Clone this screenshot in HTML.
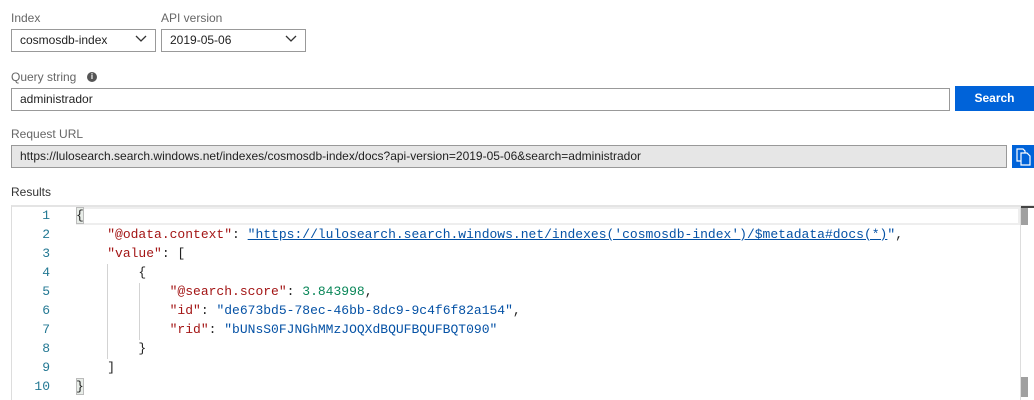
<!DOCTYPE html>
<html><head><meta charset="utf-8"><style>
*{box-sizing:border-box;margin:0;padding:0}
body{width:1034px;height:400px;overflow:hidden;background:#fff;font-family:"Liberation Sans",sans-serif;font-size:12px;color:#222;position:relative}
.a{position:absolute}
.lbl{color:#666;font-size:12px}
.box{border:1px solid #999;background:#fff;padding-left:8px;line-height:20px;font-size:12px;color:#222}
.chev{position:absolute;right:8px;top:5px}
.code{font-family:"Liberation Mono",monospace;font-size:13px;line-height:19px;white-space:pre}
.ln{position:absolute;left:11px;width:39px;text-align:right;color:#237893}
.k{color:#a31515}.s{color:#0451a5}.n{color:#098658}.p{color:#222}
.u{text-decoration:underline}
</style></head><body>
<div class="a lbl" style="left:11px;top:11px">Index</div>
<div class="a lbl" style="left:161px;top:11px">API version</div>
<div class="a box" style="left:11px;top:29px;width:145px;height:23px">cosmosdb-index<svg class="chev" width="12" height="8" viewBox="0 0 12 8"><path d="M1 1l5 5 5-5" fill="none" stroke="#333" stroke-width="1.3"/></svg></div>
<div class="a box" style="left:161px;top:29px;width:145px;height:23px">2019-05-06<svg class="chev" width="12" height="8" viewBox="0 0 12 8"><path d="M1 1l5 5 5-5" fill="none" stroke="#333" stroke-width="1.3"/></svg></div>
<div class="a lbl" style="left:11px;top:70px">Query string</div>
<div class="a" style="left:87px;top:72px;width:10px;height:10px;border-radius:50%;background:#555;color:#fff;font-size:8px;line-height:10px;text-align:center;font-weight:bold">i</div>
<div class="a box" style="left:11px;top:88px;width:939px;height:23px">administrador</div>
<div class="a" style="left:955px;top:86px;width:79px;height:25px;background:#0063d9;color:#fff;font-weight:bold;text-align:center;line-height:25px;font-size:12px">Search</div>
<div class="a lbl" style="left:11px;top:127px">Request URL</div>
<div class="a box" style="left:11px;top:145px;width:996px;height:23px;background:#e6e6e6">https://lulosearch.search.windows.net/indexes/cosmosdb-index/docs?api-version=2019-05-06&amp;search=administrador</div>
<div class="a" style="left:1012px;top:145px;width:22px;height:23px;background:#0063d9"><svg width="22" height="23" viewBox="0 0 22 23"><path d="M5 4h6l2 2v10H5z" fill="#0063d9" stroke="#fff" stroke-width="1.2"/><path d="M9 8h6l3 3v9H9z" fill="#0063d9" stroke="#fff" stroke-width="1.2"/></svg></div>
<div class="a" style="left:11px;top:185px;color:#333">Results</div>
<div class="a" style="left:11px;top:205px;width:1023px;height:195px;border-left:1px solid #ddd;border-top:2px solid #e4e4e4"></div>
<div class="a" style="left:76px;top:207px;width:944px;height:18px;border:2px solid #eee;border-left:none"></div>
<div class="a" style="left:1020px;top:207px;width:1px;height:193px;background:#ddd"></div>
<div class="a" style="left:1021px;top:207px;width:7px;height:18px;background:#a0a0a0"></div>
<div class="a" style="left:1021px;top:206px;width:13px;height:2px;background:#444"></div>
<div class="a" style="left:1021px;top:377px;width:7px;height:20px;background:#a0a0a0"></div>
<div class="a" style="left:76px;top:207px;width:8px;height:17px;background:#e8ede8;border:1px solid #bbb"></div>
<div class="a" style="left:76px;top:378px;width:8px;height:17px;background:#e8ede8;border:1px solid #bbb"></div>
<div class="a" style="left:107px;top:264px;width:1px;height:95px;background:#d3d3d3"></div>
<div class="a" style="left:139px;top:283px;width:1px;height:57px;background:#d3d3d3"></div>
<div class="code">
<div class="ln" style="top:206px">1</div><div class="ln" style="top:225px">2</div><div class="ln" style="top:244px">3</div><div class="ln" style="top:263px">4</div><div class="ln" style="top:282px">5</div><div class="ln" style="top:301px">6</div><div class="ln" style="top:320px">7</div><div class="ln" style="top:339px">8</div><div class="ln" style="top:358px">9</div><div class="ln" style="top:377px">10</div>
<div class="a p" style="left:76px;top:206px">{</div>
<div class="a" style="left:76px;top:225px">    <span class="k">"@odata.context"</span><span class="p">: </span><span class="s u">"https://lulosearch.search.windows.net/indexes('cosmosdb-index')/$metadata#docs(*)</span><span class="s">"</span><span class="p">,</span></div>
<div class="a" style="left:76px;top:244px">    <span class="k">"value"</span><span class="p">: [</span></div>
<div class="a p" style="left:76px;top:263px">        {</div>
<div class="a" style="left:76px;top:282px">            <span class="k">"@search.score"</span><span class="p">: </span><span class="n">3.843998</span><span class="p">,</span></div>
<div class="a" style="left:76px;top:301px">            <span class="k">"id"</span><span class="p">: </span><span class="s">"de673bd5-78ec-46bb-8dc9-9c4f6f82a154"</span><span class="p">,</span></div>
<div class="a" style="left:76px;top:320px">            <span class="k">"rid"</span><span class="p">: </span><span class="s">"bUNsS0FJNGhMMzJOQXdBQUFBQUFBQT090"</span></div>
<div class="a p" style="left:76px;top:339px">        }</div>
<div class="a p" style="left:76px;top:358px">    ]</div>
<div class="a p" style="left:76px;top:377px">}</div>
</div>
</body></html>
